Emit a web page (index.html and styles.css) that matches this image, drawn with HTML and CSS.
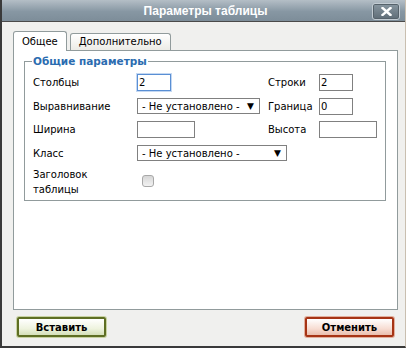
FILE: index.html
```html
<!DOCTYPE html>
<html lang="ru">
<head>
    <meta charset="UTF-8">
    <title>Параметры таблицы</title>
    <link rel="stylesheet" href="styles.css">
</head>
<body>
    <div class="dialog">
        <div class="titlebar">
            <span class="title">Параметры таблицы</span>
            <button class="close-btn">
                <svg width="11" height="9" viewBox="0 0 11 9">
                    <path d="M1.5 1 L9.5 8 M9.5 1 L1.5 8" stroke="#fff" stroke-width="2.4" stroke-linecap="square"/>
                </svg>
            </button>
        </div>

        <div class="content">
            <div class="tabs">
                <div class="tab active">Общее</div>
                <div class="tab">Дополнительно</div>
            </div>

            <div class="panel">
                <fieldset class="group">
                    <legend>Общие параметры</legend>
                    <div class="form-grid">
                        <label>Столбцы</label>
                        <div><input class="field small focused" value="2"></div>
                        <label>Строки</label>
                        <div><input class="field small" value="2"></div>

                        <label>Выравнивание</label>
                        <div><div class="select">- Не установлено -<span class="arrow">&#9660;</span></div></div>
                        <label>Граница</label>
                        <div><input class="field small" value="0"></div>

                        <label>Ширина</label>
                        <div><input class="field medium" value=""></div>
                        <label>Высота</label>
                        <div><input class="field medium" value=""></div>

                        <label>Класс</label>
                        <div class="span3"><div class="select wide">- Не установлено -<span class="arrow">&#9660;</span></div></div>

                        <label class="two-line">Заголовок<br>таблицы</label>
                        <div class="span3"><span class="checkbox"></span></div>
                    </div>
                </fieldset>
            </div>

            <div class="actions">
                <button class="btn insert">Вставить</button>
                <button class="btn cancel">Отменить</button>
            </div>
        </div>
    </div>
</body>
</html>
```

FILE: styles.css
```css
* {
    box-sizing: border-box;
}

body {
    margin: 0;
    background-color: #ffffff;
    font-family: 'DejaVu Sans', Verdana, sans-serif;
    font-size: 10px;
    color: #000;
}

.dialog {
    width: 406px;
    height: 348px;
    background-color: #f0f0ee;
    border-left: 2px solid #3a3a3a;
    border-right: 1px solid #c9bfb0;
    border-bottom: 2px solid #3a3a3a;
    display: flex;
    flex-direction: column;
}

.titlebar {
    height: 22px;
    background: linear-gradient(#b4bec6, #8797a3 55%, #7d8d99);
    border-bottom: 1px solid #4a4a4a;
    display: flex;
    align-items: center;
    justify-content: center;
    position: relative;
}

.title {
    color: #fff;
    font-family: 'Liberation Sans', Arial, sans-serif;
    font-weight: bold;
    font-size: 12px;
    margin-left: 4px;
}

.close-btn {
    position: absolute;
    right: 5px;
    top: 3px;
    width: 28px;
    height: 17px;
    border: 1px solid #c3ccd3;
    border-radius: 3px;
    background: linear-gradient(#8896a0, #5f6d77);
    padding: 0;
    display: flex;
    align-items: center;
    justify-content: center;
    box-shadow: inset 0 0 0 1px #56626b;
}

.content {
    flex: 1;
    padding: 9px 6px 0 11px;
    display: flex;
    flex-direction: column;
}

.tabs {
    display: flex;
    align-items: flex-end;
    gap: 3px;
    height: 19px;
    position: relative;
    z-index: 1;
}

.tab {
    height: 17px;
    padding: 0 8px;
    border: 1px solid #919b9c;
    border-bottom: none;
    border-radius: 3px 3px 0 0;
    background: linear-gradient(#ffffff, #ecebe6);
    line-height: 16px;
    font-size: 10px;
}

.tab.active {
    height: 20px;
    background: #fff;
    margin-bottom: -1px;
    line-height: 19px;
    padding: 0 8px;
}

.panel {
    background-color: #fff;
    border: 1px solid #919b9c;
    height: 260px;
    width: 385px;
    padding: 4px 11px 0 10px;
}

.group {
    margin: 0;
    border: 1px solid #919b9c;
    padding: 0 8px 9px 8px;
    height: 146px;
}

.group legend {
    color: #2b6cb0;
    font-weight: bold;
    font-size: 10.5px;
    padding: 0 1px;
    margin-left: -1px;
}

.form-grid {
    display: grid;
    grid-template-columns: 104px 131px 51px 1fr;
    grid-auto-rows: 23.5px;
    align-items: center;
    margin-top: 4px;
}

.form-grid label {
    color: #000;
}

.two-line {
    line-height: 15px;
    align-self: start;
    padding-top: 2px;
}

.span3 {
    grid-column: span 3;
}

.field {
    height: 17px;
    border: 1px solid #808080;
    font-family: 'DejaVu Sans', Verdana, sans-serif;
    font-size: 10px;
    padding: 0 1px;
    display: block;
}

.field.small {
    width: 34px;
}

.field.medium {
    width: 58px;
}

.field.focused {
    border-color: #5a8fd4;
    box-shadow: 0 0 0 1px #c4d8f2;
}

.select {
    height: 16px;
    width: 123px;
    border: 1px solid #808080;
    display: flex;
    align-items: center;
    justify-content: space-between;
    padding: 0 5px 0 4px;
    white-space: nowrap;
}

.select.wide {
    width: 150px;
}

.arrow {
    font-size: 9px;
}

.checkbox {
    display: block;
    width: 12px;
    height: 12px;
    margin-left: 5px;
    margin-top: 8px;
    border: 1px solid #a8a8a8;
    border-radius: 3px;
    background: linear-gradient(#d6d6d6, #f2f2f2);
}

.actions {
    display: flex;
    justify-content: space-between;
    padding: 7px 5px 0 4px;
}

.btn {
    width: 89px;
    height: 20px;
    font-family: 'DejaVu Sans', Verdana, sans-serif;
    font-weight: bold;
    font-size: 10px;
    border-radius: 2px;
    padding: 0;
    cursor: pointer;
}

.btn.insert {
    border: 2px solid #5e6e23;
    background: linear-gradient(#ffffff, #eef3de 60%, #d5e0b9);
    box-shadow: 0 0 0 1px #c8d2a2;
}

.btn.cancel {
    border: 2px solid #a63415;
    background: linear-gradient(#ffffff, #f7ddd3 60%, #eabfae);
    box-shadow: 0 0 0 1px #e2b09e;
}
```
